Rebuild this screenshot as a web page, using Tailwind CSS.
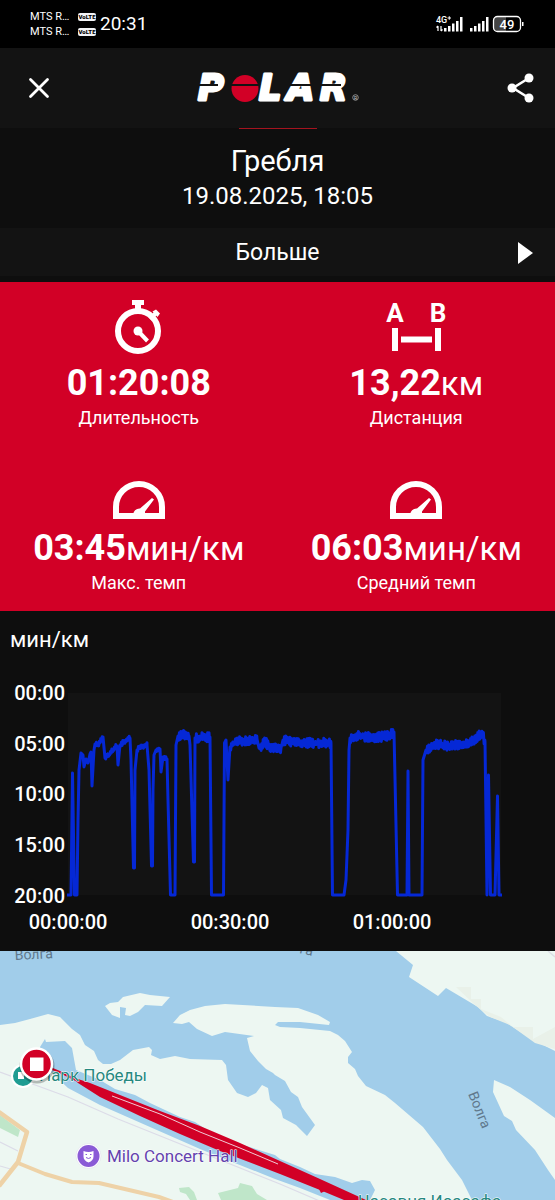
<!DOCTYPE html>
<html lang="ru">
<head>
  <meta charset="UTF-8" />
  <title>Polar - Гребля</title>
  <meta name="viewport" content="width=device-width, initial-scale=1.0">
  <!-- Tailwind CDN -->
  <script src="https://cdn.jsdelivr.net/npm/@tailwindcss/browser@4"></script>
</head>
<body class="bg-[#0e0e0e] text-white font-[Roboto,'Noto_Sans',sans-serif]">

  <!-- Status bar -->
  <div class="h-12 bg-black flex items-center justify-between px-[30px]">
    <div class="flex items-center gap-1">
      <div class="flex flex-col text-[11px] leading-[15px]">
        <div class="flex items-center gap-1.5">
          <span class="w-[42px]">MTS R…</span>
          <span class="w-[18px] h-2 rounded-xs bg-gray-100 text-black text-[6px] leading-[8px] font-black text-center">VoLTE</span>
        </div>
        <div class="flex items-center gap-1.5">
          <span class="w-[42px]">MTS R…</span>
          <span class="w-[18px] h-2 rounded-xs bg-gray-100 text-black text-[6px] leading-[8px] font-black text-center">VoLTE</span>
        </div>
      </div>
      <span class="text-[19px] leading-6">20:31</span>
    </div>
    <svg class="w-[90px] h-5 overflow-visible" viewBox="0 0 90 20" fill="#fff">
      <text x="1" y="9" font-size="9" font-weight="500">4G</text>
      <path d="M12.500 4h3.500M14.250 2.250v3.500" stroke="#fff" stroke-width="1"/>
      <path d="M3 12v5M1.500 13.500L3 12M6 12v5M7.500 15.500L6 17" stroke="#fff" stroke-width="1.200"/>
      <path d="M9 14h2.500v3.500H9zM13 12h2.500v5.500H13zM17 9.500h2.500v8H17zM21 7h2.500v10.500H21zM25 3h2.500v14.500H25z"/>
      <path d="M35 14h2.500v3.500H35zM39 12h2.500v5.500H39zM43 9.500h2.500v8H43zM47 7h2.500v10.500H47zM51 3h2.500v14.500H51z"/>
      <path d="M61 3h10v14H61a3 3 0 0 1-3-3V6a3 3 0 0 1 3-3z" fill="#444"/>
      <rect x="58.500" y="2.500" width="27" height="15" rx="4" fill="none" stroke="#fff" stroke-width="1.300"/>
      <path d="M87 8h1.500v4H87z"/>
      <text x="72" y="14.500" font-size="13" font-weight="500" text-anchor="middle">49</text>
    </svg>
  </div>

  <!-- App bar -->
  <header class="h-20 bg-[#131313] flex items-center justify-between px-5">
    <button class="w-[38px] h-10 flex items-center justify-center" aria-label="Закрыть">
      <svg class="w-6 h-6" viewBox="0 0 24 24" fill="none" stroke="#fff" stroke-width="2.800" stroke-linecap="round">
        <path d="M3.500 3.500l17 17M20.500 3.500l-17 17"/>
      </svg>
    </button>
    <svg class="w-[166px] h-8 overflow-visible" viewBox="0 0 166 32" fill="#fff">
      <g font-family="'DejaVu Sans', sans-serif" font-weight="bold" font-style="italic" font-size="35" stroke="#fff" stroke-width="3" stroke-linejoin="round">
        <text x="3" y="28">P</text>
        <text x="64" y="28">L</text>
        <text x="92" y="28">A</text>
        <text x="125" y="28">R</text>
      </g>
      <circle cx="50" cy="16.500" r="13.500" fill="#d20026"/>
      <path d="M2 12h21v2H2zM36 12h28v2H36zM94 12h27v2H94zM124 12h22v2h-22z" fill="#131313"/>
      <circle cx="160.500" cy="25.500" r="2.800" fill="none" stroke="#aaa" stroke-width=".8"/>
      <text x="160.500" y="27.500" font-size="5" fill="#ccc" text-anchor="middle">R</text>
    </svg>
    <button class="w-[38px] h-10 flex items-center justify-end" aria-label="Поделиться">
      <svg class="w-[30px] h-[30px]" viewBox="0 0 30 30" fill="#fff">
        <path d="M24 5L8 15l16 10" fill="none" stroke="#fff" stroke-width="2.600"/>
        <circle cx="24" cy="5" r="4.500"/><circle cx="7" cy="15" r="4.500"/><circle cx="24" cy="25" r="4.500"/>
      </svg>
    </button>
  </header>

  <!-- Title -->
  <section class="h-[100px] text-center">
    <div class="w-[78px] h-px mx-auto bg-[#a5141f]"></div>
    <h1 class="pt-3.5 text-[29px] leading-9">Гребля</h1>
    <p class="text-[24px] leading-[34px]">19.08.2025, 18:05</p>
  </section>

  <button class="w-full h-12 pt-0.5 bg-[#131313] grid grid-cols-[1fr_auto_1fr] items-center px-[22px]">
    <span class="col-start-2 text-[23px] leading-8">Больше</span>
    <svg class="w-[15px] h-[22px] justify-self-end" viewBox="0 0 15 22" fill="#fff"><path d="M0 0l15 11L0 22z"/></svg>
  </button>

  <!-- Summary -->
  <section class="mt-1.5 pt-[18px] pb-4 bg-[#d20026] grid grid-cols-2 gap-y-[51px] text-center">
    <div class="flex flex-col items-center">
      <svg class="w-[54px] h-[54px]" viewBox="0 0 54 54" fill="#fff">
        <circle cx="26" cy="31" r="20" fill="none" stroke="#fff" stroke-width="6"/>
        <path d="M20 0h12v5h-3v6h-6V5h-3z"/>
        <path d="M38 19l6-6" stroke="#fff" stroke-width="4"/>
        <path d="M40.500 11.500l3.500-2 4 4-2.500 3.500z"/>
        <circle cx="26" cy="31" r="4.500"/>
        <path d="M26 31l9.500 10" stroke="#fff" stroke-width="4"/>
      </svg>
      <div class="mt-[9px] h-10 text-[33px] leading-10"><span class="text-[36px] font-bold">01:20:08</span></div>
      <div class="mt-[3px] text-[18px] leading-6">Длительность</div>
    </div>
    <div class="flex flex-col items-center">
      <svg class="w-[60px] h-[54px] overflow-visible" viewBox="0 0 60 54" fill="#fff">
        <g font-family="Roboto, sans-serif" font-weight="bold" font-size="26" text-anchor="middle">
          <text x="9" y="22">A</text>
          <text x="52" y="22">B</text>
        </g>
        <path d="M6 28h6v23H6zM49 28h6v23h-6zM15 36.500h31v6H15z"/>
      </svg>
      <div class="mt-[9px] h-10 text-[33px] leading-10"><span class="text-[36px] font-bold">13,22</span>км</div>
      <div class="mt-[3px] text-[18px] leading-6">Дистанция</div>
    </div>
    <div class="flex flex-col items-center">
      <svg class="w-[52px] h-[38px]" viewBox="0 0 52 38" fill="#fff">
        <path d="M3 35V26a23 23 0 0 1 46 0v9z" fill="none" stroke="#fff" stroke-width="6"/>
        <path d="M20 34a6.500 6.500 0 0 1 7-6.500L39 17l2 1.500-9 12V35H20z"/>
      </svg>
      <div class="mt-[9px] h-10 text-[33px] leading-10"><span class="text-[36px] font-bold">03:45</span>мин/км</div>
      <div class="mt-[3px] text-[18px] leading-6">Макс. темп</div>
    </div>
    <div class="flex flex-col items-center">
      <svg class="w-[52px] h-[38px]" viewBox="0 0 52 38" fill="#fff">
        <path d="M3 35V26a23 23 0 0 1 46 0v9z" fill="none" stroke="#fff" stroke-width="6"/>
        <path d="M20 34a6.500 6.500 0 0 1 7-6.500L39 17l2 1.500-9 12V35H20z"/>
      </svg>
      <div class="mt-[9px] h-10 text-[33px] leading-10"><span class="text-[36px] font-bold">06:03</span>мин/км</div>
      <div class="mt-[3px] text-[18px] leading-6">Средний темп</div>
    </div>
  </section>

  <!-- Pace chart -->
  <section>
    <h2 class="pt-[13px] pb-3.5 pl-2.5 text-[22px] leading-8">мин/км</h2>
    <svg class="block w-full" viewBox="0 0 555 281">
      <rect x="68" y="23" width="433" height="202" fill="#131313"/>
      <g fill="#fff" font-size="20" font-weight="500" text-anchor="end">
        <text x="65" y="30">00:00</text>
        <text x="65" y="81">05:00</text>
        <text x="65" y="131">10:00</text>
        <text x="65" y="182">15:00</text>
        <text x="65" y="233">20:00</text>
      </g>
      <g fill="#fff" font-size="20" font-weight="500" text-anchor="middle">
        <text x="68" y="259">00:00:00</text>
        <text x="230" y="259">00:30:00</text>
        <text x="392" y="259">01:00:00</text>
      </g>
      <path id="pace" fill="none" stroke="#0528d6" stroke-width="3" stroke-linejoin="round"/>
    </svg>
  </section>

  <!-- Map -->
  <section>
    <svg class="block w-full bg-[#a1cdea]" viewBox="0 6 555 249">
      <g fill="#edf7f2">
        <path d="M0 80L15 78 30 74 48 69 60 72 72 84 80 90 85 100 94 106 98 115 103 119 111 119 120 115 133 105 149 102 152 105 151 110 160 114 175 111 190 114 222 115 226 120 228 135 237 148 248 152 256 148 262 140 268 143 270 155 281 165 283 173 296 180 307 191 315 180 302 162 298 152 291 147 285 136 275 130 273 128 266 124 258 116 250 106 247 93 254 91 225 87 212 91 197 84 189 77 182 79 173 78 180 70 190 65 205 61 225 59 275 62 298 63 318 70 330 77 329 80 300 77 278 77 275 80 280 82 300 83 330 86 338 90 345 96 352 107 348 112 348 118 355 124 358 131 366 141 385 150 395 158 423 182 440 204 447 215 462 235 472 255H0z"/>
        <path d="M105 61L110 58 118 57 123 52 140 48 150 50 170 52 162 61 145 60 138 67 130 71 125 70 126 63 120 62 120 73 112 70z"/>
        <path d="M396 6l17 14-4 12 29 19 8-8 32 19 9 9 18 6 25 16 15 8 10 5V6z"/>
        <path d="M494 135l-1 12 11 24 8 5 4 9 19 20 13 20 7 10v-62l-25-18-20-13z"/>
      </g>
      <path d="M456 42h15v12h10v10l20 8 12 10h20v12l22-12v22l-20-6-25-18-20-8-15-12z" fill="#e9f1e9"/>
      <path d="M548 6l7 6" stroke="#dcdfe5" stroke-width="1.500"/>
      <!-- canal -->
      <path d="M40 102L45 94 46 97 65 96 72 103 76 125 100 135 115 144 135 150 150 158 180 172 195 177 210 187 240 199 275 210 280 214 300 222 315 229 335 232 352 238 362 235 370 236 375 245 370 255H330L300 243 275 234 200 204 150 182 100 160 68 143 52 128 40 118z" fill="#a1cdea"/>
      <!-- greenery -->
      <path d="M0 170l20 15-2 7L0 183z" fill="#bfe6c9"/>
      <path d="M218 248l20-5 2-5 12 3 5 8 10 6h-46zM179 243l10-1 5 5 3 8h-7l-4-6-6-2z" fill="#bfe6c9"/>
      <g fill="none" stroke="#dcdce8" stroke-width="1.200">
        <path d="M0 127l68 25 50 22 162 65 42 18"/>
        <path d="M0 197l18 9M0 221l14 4"/>
      </g>
      <g fill="none" stroke="#eed2a7" stroke-width="4.500" stroke-linejoin="round">
        <path d="M-1 167l28 20-9 30-19 24"/>
        <path d="M18 218l27 11 27 8 27 1 60 14 14 5" stroke-width="4"/>
      </g>

      <!-- park -->
      <circle cx="23" cy="131" r="12" fill="#fff"/>
      <circle cx="23" cy="131" r="10" fill="#1f9c92"/>
      <path d="M18 127h6v7h-6z" fill="#fff"/>

      <!-- track -->
      <path d="M50 123L62 128 78 136" fill="none" stroke="#d20026" stroke-width="2"/>
      <path d="M72 132L90 138 110 146 160 166 200 181 240 198 280 216 320 234 366 255H344L320 245 280 229 220 206 180 189 140 171 100 152 78 138z" fill="#d20026"/>
      <path d="M112 151L160 169 200 187 240 203 278 219" fill="none" stroke="#f0c9d4" stroke-width="1"/>
      <path d="M318 242h7v4l-4 2z" fill="#d20026"/>

      <g font-size="17" stroke="#fff" stroke-width="1" stroke-linejoin="round" paint-order="stroke">
        <text x="39" y="136" fill="#26887f">Парк Победы</text>
        <text x="107" y="217" fill="#6342ae">Milo Concert Hall</text>
        <text x="358" y="262" fill="#26887f">Часовня Иоасафа</text>
      </g>

      <!-- concert hall -->
      <circle cx="88.500" cy="211" r="12.500" fill="#fff" stroke="#dcdce8" stroke-width=".5"/>
      <circle cx="88.500" cy="211" r="11" fill="#8a5bd6"/>
      <path d="M83.500 206q5 2 10 0v5.500q0 4-5 6-5-2-5-6z" fill="#fff"/>
      <path d="M85.500 209.500h1.500M90 209.500h1.500M86 212.500q2.500 2 5 0" stroke="#8a5bd6" fill="none"/>

      <g fill="#60788c" font-size="14">
        <text x="15" y="15" transform="rotate(-3 15 15)">Волга</text>
        <text transform="translate(468 149) rotate(68)">Волга</text>
        <text x="299" y="8" transform="rotate(12 299 8)">га</text>
      </g>

      <!-- finish marker -->
      <circle cx="37" cy="121" r="17.500" fill="#000" opacity=".25"/>
      <circle cx="36.500" cy="119" r="15.500" fill="#d20026" stroke="#fff" stroke-width="2.500"/>
      <path d="M30 112.500h13.500V126H30z" fill="#fff"/>
    </svg>
  </section>

  <script>
    // pace samples: x, y in chart units
    const samples = [
      [67,225],[71,225],[72.5,103],[74.5,225],[77,225],[78,150],[79,100],[81,83],[83,85],[84,97],[86,89],[88,93],[90,84],[91,82],[92,116],[94,80],
      [95,74],[98,75],[103,67],[105,88],[109,84],[113,79],[117,76],[118,95],[120,75],[125,71],[130,68],[131,90],[133.5,198],[134.5,198],
      [135,100],[137,80],[140,77],[147,75],[149,100],[151.5,196],[152.5,196],[153,120],[154,85],[156,80],[160,79],[161,102],[163,87],[167,89],
      [168,130],[170.5,225],[175,225],[175.5,150],[176,75],[178,66],[184,64],[189,66],[190,75],[193.5,192],[194.5,192],[195,68],[210,67],
      [211.5,225],[223.5,225],[224.5,73],[226,70],[228,110],[230,77],[234,73],[240,71],[257,69],[259,78],[265,72],[270,77],[281,78],[283,70],
      [300,73],[331,73],[332.5,225],[344,225],[346,210],[348,160],[349,80],[350,68],[360,66],[375,68],[390,65],[394,62],[397.5,225],[407,225],
      [408,101],[409,225],[422,225],[423,90],[426,80],[435,74],[450,76],[465,74],[475,69],[482,63],[485,72],[487,225],[488.5,105],
      [490.5,225],[495,225],[497.5,126],[499,225],[502,225]
    ];

    let seed = 7;
    function rnd() {
      seed = (seed * 16807) % 2147483647;
      return seed / 2147483647;
    }

    let d = "M67 225";
    for (let i = 1; i < samples.length; i++) {
      const [x0, y0] = samples[i - 1];
      const [x1, y1] = samples[i];
      // GPS jitter on the steady stretches
      if (x1 - x0 >= 3 && y0 < 90 && y1 < 90) {
        const amp = x0 < 176 ? 2 : 4;
        let side = 1;
        for (let x = x0 + 0.7; x < x1; x += 0.7) {
          const y = y0 + (y1 - y0) * (x - x0) / (x1 - x0);
          d += ` L${x.toFixed(1)} ${(y + side * amp * (0.3 + 0.9 * rnd())).toFixed(1)}`;
          side = -side;
        }
      }
      d += ` L${x1} ${y1}`;
    }
    document.getElementById('pace').setAttribute('d', d);
  </script>
</body>
</html>
